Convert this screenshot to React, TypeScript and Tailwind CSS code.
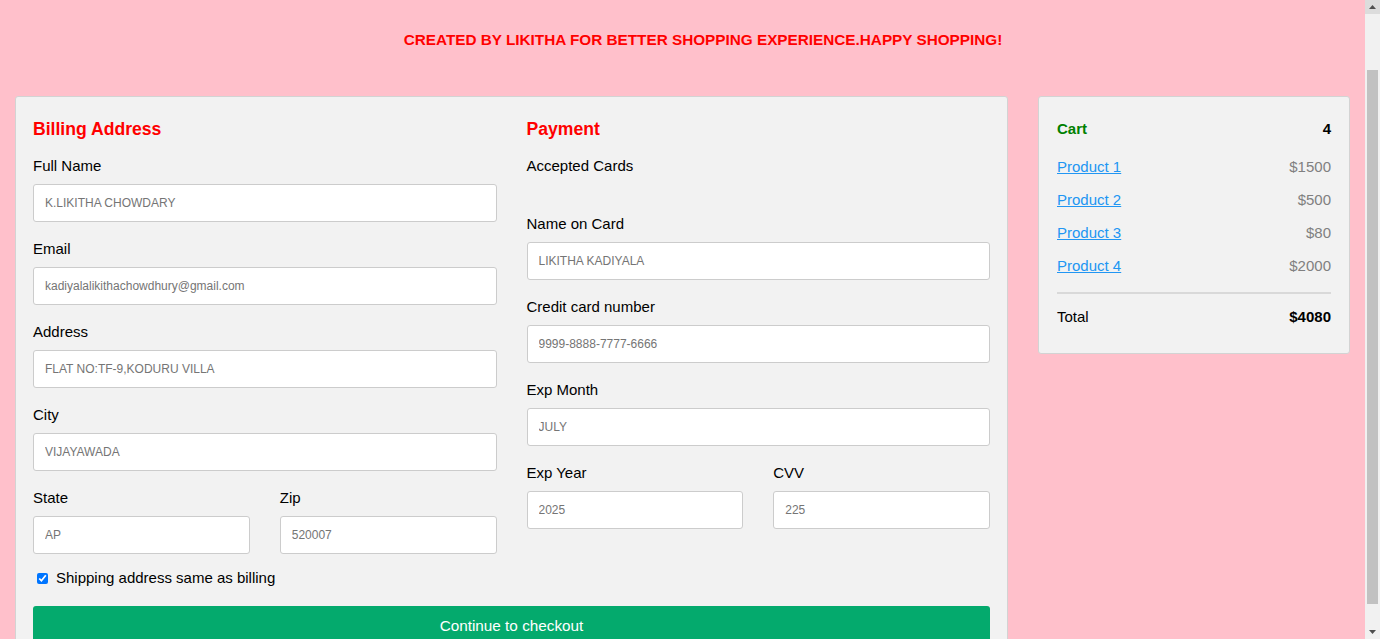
import React from "react";

const Field = ({ label, placeholder }: { label: string; placeholder: string }) => (
  <div className="flex flex-col">
    <label className="text-[15px] leading-[16px] mb-[10px] text-black">{label}</label>
    <input
      type="text"
      placeholder={placeholder}
      className="h-[38px] w-full mb-[19px] px-[11px] bg-white border border-[#cccccc] rounded-[3px] text-[12px] text-black placeholder:text-[#757575] outline-none"
    />
  </div>
);

const products = [
  { name: "Product 1", price: "$1500" },
  { name: "Product 2", price: "$500" },
  { name: "Product 3", price: "$80" },
  { name: "Product 4", price: "$2000" },
];

export default function App() {
  return (
    <div className="flex bg-[#ffc0cb] font-['Liberation_Sans',Arial,sans-serif] text-black">
      <div className="flex-1 min-w-0 pb-[80px]">
        <h2 className="pt-[31px] mb-[47px] pl-[41px] text-center text-[15.3px] leading-[18px] font-bold text-[#ff0000]">
          CREATED BY LIKITHA FOR BETTER SHOPPING EXPERIENCE.HAPPY SHOPPING!
        </h2>

        <div className="flex items-start gap-[30px] px-[15px]">
          {/* form */}
          <div className="flex-1 bg-[#f2f2f2] border border-[#d3d3d3] rounded-[3px] pt-[22px] pb-[14px] px-[17px]">
            <div className="grid grid-cols-2 gap-x-[30px]">
              <div className="flex flex-col">
                <h3 className="text-[17.6px] leading-[20px] font-bold text-[#ff0000] mb-[19px]">Billing Address</h3>
                <Field label="Full Name" placeholder="K.LIKITHA CHOWDARY" />
                <Field label="Email" placeholder="kadiyalalikithachowdhury@gmail.com" />
                <Field label="Address" placeholder="FLAT NO:TF-9,KODURU VILLA" />
                <Field label="City" placeholder="VIJAYAWADA" />
                <div className="grid grid-cols-2 gap-x-[30px]">
                  <Field label="State" placeholder="AP" />
                  <Field label="Zip" placeholder="520007" />
                </div>
              </div>

              <div className="flex flex-col">
                <h3 className="text-[17.6px] leading-[20px] font-bold text-[#ff0000] mb-[19px]">Payment</h3>
                <label className="text-[15px] leading-[16px] mb-[10px]">Accepted Cards</label>
                <div className="h-[32px]" />
                <Field label="Name on Card" placeholder="LIKITHA KADIYALA" />
                <Field label="Credit card number" placeholder="9999-8888-7777-6666" />
                <Field label="Exp Month" placeholder="JULY" />
                <div className="grid grid-cols-2 gap-x-[30px]">
                  <Field label="Exp Year" placeholder="2025" />
                  <Field label="CVV" placeholder="225" />
                </div>
              </div>
            </div>

            <label className="flex items-center h-[16px] text-[15px] leading-[16px] -mt-[3px]">
              <input type="checkbox" defaultChecked className="w-[11px] h-[11px] ml-[4px] mr-[8px] accent-[#0075ff]" />
              Shipping address same as billing
            </label>

            <button className="mt-[20px] w-full h-[40px] bg-[#04aa6d] text-white text-[15.3px] rounded-[3px]">
              Continue to checkout
            </button>
          </div>

          {/* cart */}
          <div className="w-[312px] bg-[#f2f2f2] border border-[#d3d3d3] rounded-[3px] pt-[16px] pb-[19px] px-[18px]">
            <div className="flex justify-between items-center h-[33px] text-[15px] font-bold">
              <span className="text-[#008000]">Cart</span>
              <span>4</span>
            </div>
            <div className="mt-[5px]">
              {products.map((p) => (
                <div key={p.name} className="flex justify-between items-center h-[33px] text-[15px]">
                  <a href="#" className="text-[#2196f3] underline">{p.name}</a>
                  <span className="text-[#808080]">{p.price}</span>
                </div>
              ))}
            </div>
            <hr className="mt-[9px] mb-[7px] border-t-[2px] border-[#d9d9d9]" />
            <div className="flex justify-between items-center h-[33px] text-[15px]">
              <span>Total</span>
              <b>$4080</b>
            </div>
          </div>
        </div>
      </div>

      {/* scrollbar */}
      <div className="w-[15px] h-[639px] shrink-0 flex flex-col bg-[#f1f1f1]">
        <div className="h-[14px] bg-[#dcdcdc] flex items-center justify-center">
          <svg width="7" height="4" viewBox="0 0 7 4"><path d="M3.5 0L7 4H0z" fill="#505050" /></svg>
        </div>
        <div className="mt-[56px] h-[534px] mx-[2px] bg-[#c1c1c1]" />
        <div className="flex-1" />
        <div className="h-[14px] flex items-center justify-center">
          <svg width="7" height="4" viewBox="0 0 7 4"><path d="M0 0H7L3.5 4z" fill="#505050" /></svg>
        </div>
      </div>
    </div>
  );
}
